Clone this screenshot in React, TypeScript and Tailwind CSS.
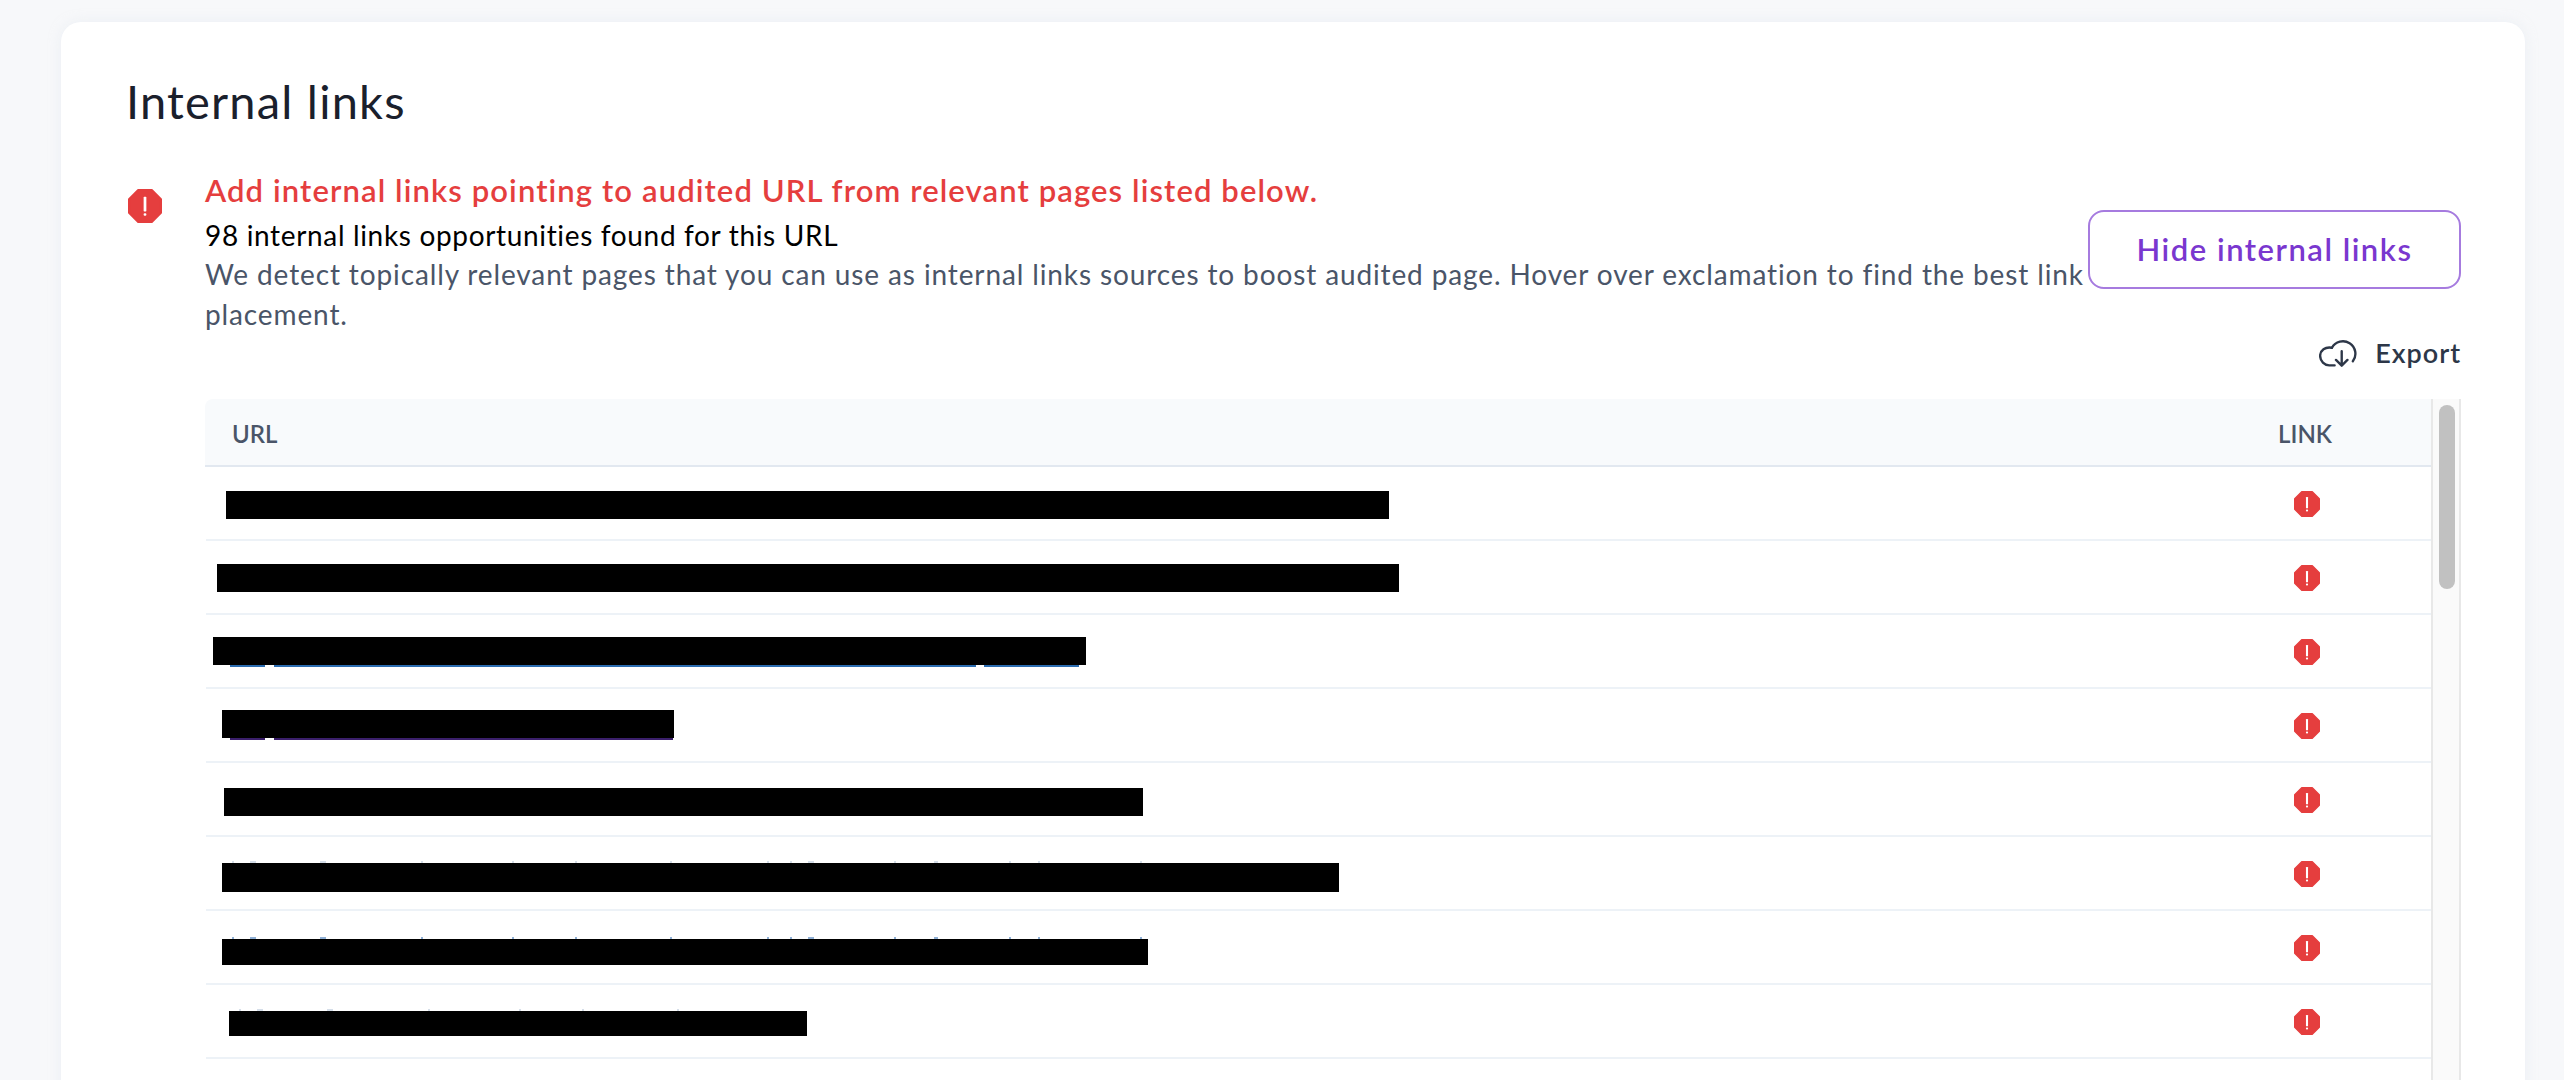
const FONT = "font-['Lato','Noto_Sans',sans-serif]";

const ROWS = [
  { bar: 'mt-[24px] ml-[20px] w-[1163px] h-[28px]' },
  { bar: 'mt-[23px] ml-[11px] w-[1182px] h-[28px]' },
  {
    bar: 'mt-[22px] ml-[7px] w-[873px] h-[28px]',
    underline: 'bg-[#2b6cb0]',
    segments: [[17, 35], [61, 702], [771, 95]],
  },
  {
    bar: 'mt-[21px] ml-[16px] w-[452px] h-[28px]',
    underline: 'bg-[#3b1f6b]',
    segments: [[8, 35], [52, 399]],
  },
  { bar: 'mt-[25px] ml-[18px] w-[919px] h-[28px]' },
  { bar: 'mt-[26px] ml-[16px] w-[1117px] h-[29px]', ticks: 15, tickColor: 'bg-[#d5dee9]' },
  { bar: 'mt-[28px] ml-[16px] w-[926px] h-[26px]', ticks: 15, tickColor: 'bg-[#8fb0d6]' },
  { bar: 'mt-[26px] ml-[23px] w-[578px] h-[25px]', ticks: 7, tickColor: 'bg-[#d5dee9]' },
  { bar: 'mt-[26px] ml-[16px] w-[800px] h-[28px]' },
];

// tops of the link text that stick out above the redaction bars
const TICKS = [
  [10, 2], [28, 6], [98, 6], [199, 2], [290, 2], [353, 2], [448, 2], [545, 2],
  [568, 2], [586, 6], [672, 2], [712, 4], [787, 2], [816, 2], [918, 2],
];

function AlertIcon({ className }: { className: string }) {
  return (
    <svg viewBox="0 0 100 100" className={className}>
      <polygon
        points="30,3 70,3 97,30 97,70 70,97 30,97 3,70 3,30"
        fill="#E53E3E"
        stroke="#E53E3E"
        strokeWidth="6"
        strokeLinejoin="round"
      />
      <rect x="46" y="23" width="8" height="43" rx="2" fill="#fff" />
      <rect x="46" y="71" width="8" height="8" rx="3" fill="#fff" />
    </svg>
  );
}

function CloudIcon() {
  return (
    <svg
      viewBox="0 0 112 83"
      fill="none"
      stroke="#2D3748"
      strokeWidth="7"
      strokeLinecap="round"
      strokeLinejoin="round"
      className="w-[38px] h-[28px]"
    >
      <path d="M100 66 A37 37 0 1 0 38 26" />
      <path d="M38 26 C18 22 3 34 3 50 C3 66 16 78 30 78 H46" />
      <path d="M67 36 V78 M50 62 L67 79 L84 62" />
    </svg>
  );
}

export default function App() {
  return (
    <div className={`h-screen overflow-hidden bg-[#f7f8fa] pt-[22px] pl-[61px] ${FONT}`}>
      <div className="w-[2464px] h-[1100px] rounded-t-[20px] bg-white pt-[51px] pl-[66px] pr-[64px] shadow-[0_0_12px_rgba(226,232,240,0.5)]">
        <h1 className="-ml-px text-[47px] leading-[56px] font-normal tracking-[1.2px] text-[#1a202c]">Internal links</h1>

        {/* Alert */}
        <div className="mt-[40px] flex items-center">
          <AlertIcon className="ml-px w-[34px] h-[34px] shrink-0 self-start mt-[20px]" />
          <div className="ml-[43px] flex-1 min-w-0">
            <p className="mb-[5px] text-[31px] leading-[42px] font-semibold tracking-[1.1px] text-[#E53E3E]">
              Add internal links pointing to audited URL from relevant pages listed below.
            </p>
            <p className="text-[28px] leading-[38px] tracking-[0.66px] text-black">
              98 internal links opportunities found for this URL
            </p>
            <p className="text-[28px] leading-[40px] tracking-[0.88px] text-[#4A5568]">
              We detect topically relevant pages that you can use as internal links sources to boost audited page. Hover over exclamation to find the best link placement.
            </p>
          </div>
          <button className="mb-[5px] w-[373px] h-[79px] shrink-0 rounded-[16px] border-2 border-[#a67bdf] text-[31px] font-semibold tracking-[1.5px] text-[#7a37cf]">
            Hide internal links
          </button>
        </div>

        {/* Export */}
        <div className="mt-[5px] flex justify-end items-center gap-[18px] text-[27px] leading-[28px] font-semibold tracking-[1px] text-[#2D3748]">
          <CloudIcon />
          <span>Export</span>
        </div>

        {/* Table */}
        <div className="mt-[32px] ml-[78px] flex">
          <div className="flex-1 min-w-0">
            <div className="h-[68px] flex items-center justify-between bg-[#f8fafc] border-b-2 border-[#e2e8f0] rounded-tl-[8px] pt-[3px] pl-[27px] pr-[99px] text-[24px] font-semibold text-[#4A5568]">
              <span>URL</span>
              <span>LINK</span>
            </div>
            {ROWS.map((row, i) => (
              <div key={i} className="ml-px h-[74px] flex justify-between border-b-2 border-[#edf2f7]">
                <div className={`relative bg-black ${row.bar}`}>
                  {row.segments?.map(([left, width]) => (
                    <span
                      key={left}
                      className={`absolute top-full h-[2px] ${row.underline}`}
                      style={{ left, width }}
                    />
                  ))}
                  {row.ticks &&
                    TICKS.slice(0, row.ticks).map(([left, width]) => (
                      <span
                        key={left}
                        className={`absolute -top-[2px] h-[2px] ${row.tickColor}`}
                        style={{ left, width }}
                      />
                    ))}
                </div>
                <div className="mr-[111px] pt-[2px] flex items-center">
                  <AlertIcon className="w-[26px] h-[26px]" />
                </div>
              </div>
            ))}
          </div>

          {/* Scrollbar */}
          <div className="w-[30px] shrink-0 bg-[#fafafa] border-x-2 border-[#e8e8e8] px-[6px] pt-[6px]">
            <div className="w-[16px] h-[184px] rounded-full bg-[#c1c1c1]" />
          </div>
        </div>
      </div>
    </div>
  );
}
